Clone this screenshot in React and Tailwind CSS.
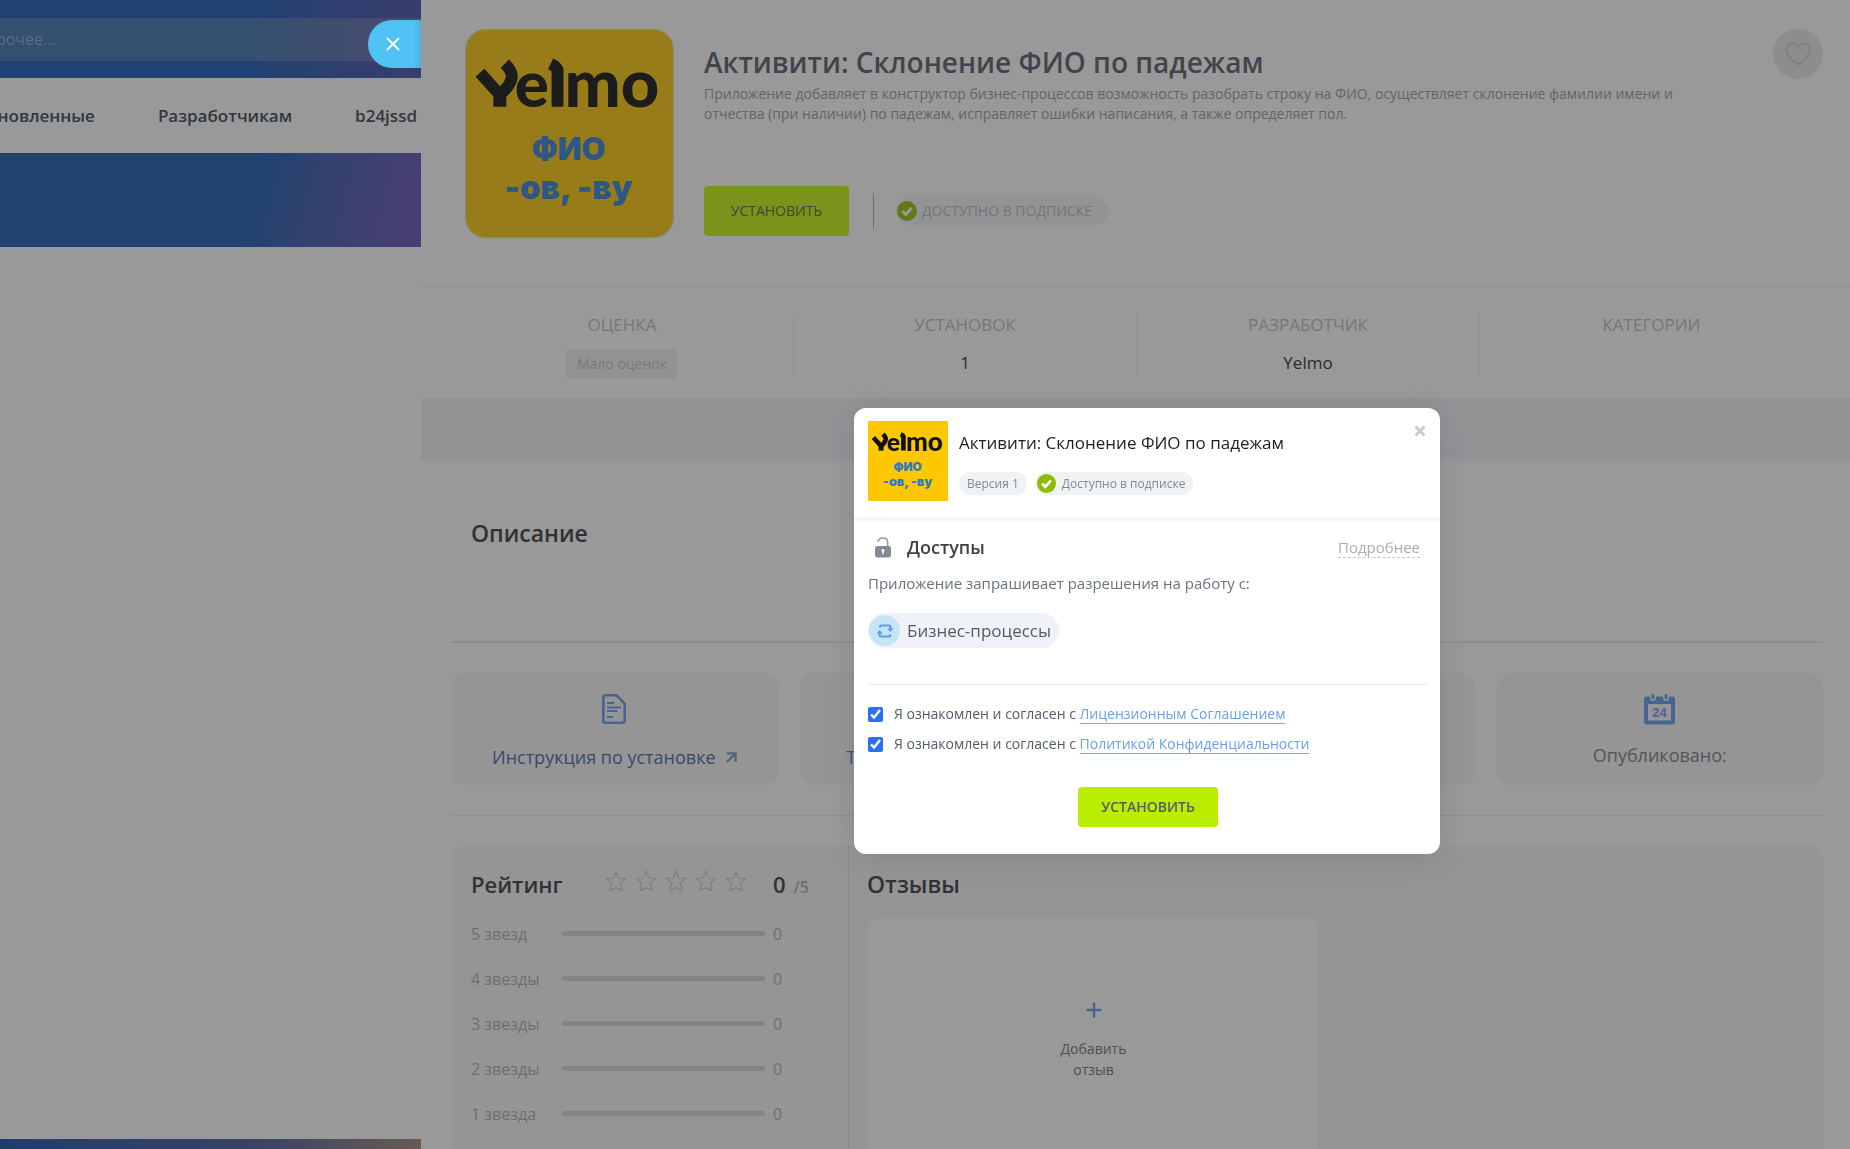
import { useState } from 'react'
import { X, Plus } from 'lucide-react'

const APP_NAME = 'Активити: Склонение ФИО по падежам'

function AppLogo({ className, ground, ink, blue }) {
  return (
    <svg viewBox="0 0 208 208" className={className} role="img" aria-label="Yelmo ФИО">
      <rect width="208" height="208" fill={ground} />
      <g fill="none" stroke={ink}>
        <path d="M14 43 L34 65 Q44 57 46 48 Q47 42 39 34" strokeWidth="12" />
        <path d="M34 60 V77" strokeWidth="13" />
        <path d="M92 77 V40 Q91 37 85 34" strokeWidth="12" />
      </g>
      <text x="49" y="77" fontFamily="Lato" fontWeight="900" fontSize="64" fill={ink}>e</text>
      <text x="99" y="77" fontFamily="Lato" fontWeight="900" fontSize="67" fill={ink}>mo</text>
      <g fill={blue} textAnchor="middle" fontFamily="Inter" fontWeight="900">
        <text x="103" y="131" fontSize="31">ФИО</text>
        <text x="103" y="170" fontSize="33">-ов, -ву</text>
      </g>
    </svg>
  )
}

function CheckBadge({ className, ground = '#8fbc00' }) {
  return (
    <svg viewBox="0 0 20 20" className={className} aria-hidden="true">
      <circle cx="10" cy="10" r="10" fill={ground} />
      <path d="M5.5 10.2 L8.8 13.4 L14.6 7" fill="none" stroke="#fff" strokeWidth="2.8" />
    </svg>
  )
}

function HeartIcon() {
  return (
    <svg viewBox="0 0 24 24" className="size-7" fill="none" stroke="#d6d7d8" strokeWidth="1.8" aria-hidden="true">
      <path d="M12 21 C6 16.5 2 13 2 8.5 C2 5.4 4.4 3 7.3 3 C9.3 3 11 4 12 5.8 C13 4 14.7 3 16.7 3 C19.6 3 22 5.4 22 8.5 C22 13 18 16.5 12 21 Z" />
    </svg>
  )
}

function DocumentIcon() {
  return (
    <svg viewBox="0 0 24 30" className="h-[30px] w-6" fill="none" stroke="#76a9f2" strokeWidth="2" aria-hidden="true">
      <path d="M3.5 1.3 H14.5 L22.7 9.8 V26.5 Q22.7 28.7 20.5 28.7 H3.5 Q1.3 28.7 1.3 26.5 V3.5 Q1.3 1.3 3.5 1.3 Z" strokeWidth="2.6" />
      <path d="M5 9 H12.5 M5 13.6 H19 M5 17 H15.5 M5 23 H11" />
    </svg>
  )
}

function CalendarIcon() {
  return (
    <svg viewBox="0 0 31 32" className="h-8 w-[31px]" aria-hidden="true">
      <path
        fillRule="evenodd"
        fill="#76a9f2"
        d="M2.5 3.5 H28.5 Q31 3.5 31 6 V29 Q31 31.5 28.5 31.5 H2.5 Q0 31.5 0 29 V6 Q0 3.5 2.5 3.5 Z M4 11 V27.5 H27 V11 Z"
      />
      <g fill="#76a9f2" stroke="#f9f9f9" strokeWidth="1.6">
        <rect x="6.6" y="0" width="4.6" height="7" rx="2.3" />
        <rect x="19.8" y="0" width="4.6" height="7" rx="2.3" />
      </g>
      <text x="15.5" y="23.5" textAnchor="middle" fontFamily="Liberation Sans" fontWeight="700" fontSize="13" fill="#76a9f2">
        24
      </text>
    </svg>
  )
}

function ArrowOut() {
  return (
    <svg viewBox="0 0 12 12" className="size-[11px]" fill="none" stroke="#8da6cf" strokeWidth="2.4" aria-hidden="true">
      <path d="M1 1.5 H10.5 V11 M10.5 1.5 L1 11" />
    </svg>
  )
}

function StarIcon() {
  return (
    <svg viewBox="0 0 22 22" className="size-[22px]" fill="none" stroke="#d2d5d8" strokeWidth="1.2" aria-hidden="true">
      <path d="M11 1 L13.6 8 L21 8.4 L15.2 12.8 L17.2 20.6 L11 17.6 L4.8 20.6 L6.8 12.8 L1 8.4 L8.4 8 Z" strokeLinejoin="round" />
    </svg>
  )
}

function LockIcon() {
  return (
    <svg viewBox="0 0 16 21" className="h-[21px] w-4" aria-hidden="true">
      <path d="M3 5 Q3.5 1 8 1 Q12.7 1 12.7 5.6 V10" fill="none" stroke="#949ba5" strokeWidth="1.5" />
      <rect y="9" width="16" height="11.5" rx="2.5" fill="#828b95" />
      <circle cx="8" cy="13.5" r="1.4" fill="#fff" />
      <rect x="7.3" y="13.5" width="1.4" height="3.6" fill="#fff" />
    </svg>
  )
}

function ProcessIcon() {
  return (
    <svg viewBox="0 0 18 16" className="h-4 w-[18px]" fill="none" stroke="#5f9bea" strokeWidth="2.2" aria-hidden="true">
      <path d="M4 4.5 V3.6 Q4 2.5 5.2 2.5 H13 Q14.4 2.5 14.4 3.8 V6" />
      <path d="M14 11.5 V12.4 Q14 13.5 12.8 13.5 H5 Q3.6 13.5 3.6 12.2 V10" />
      <path d="M11.2 5.6 H17.6 L14.4 9 Z M0.4 10.4 H6.8 L3.6 7 Z" fill="#5f9bea" stroke="none" />
    </svg>
  )
}

function StorePage() {
  return (
    <aside className="flex w-[421px] shrink-0 flex-col overflow-hidden bg-white">
      <div className="bg-linear-to-r from-[#356ebd] via-[#356ebb] via-60% to-[#5f65b8]">
        <div className="flex h-[78px] items-center">
          <input
            type="text"
            aria-label="Поиск"
            placeholder="прочее..."
            className="-ml-[22px] h-[43px] flex-1 bg-[#e8e0b8]/20 pl-2 text-base text-white outline-none placeholder:text-[#b0bcd8]/80"
          />
        </div>
      </div>
      <nav className="flex h-[75px] items-center justify-end gap-[63px] pr-1 text-[17px] font-semibold whitespace-nowrap text-[#525c69]">
        <a href="#installed" className="shrink-0">Установленные</a>
        <a href="#developers" className="shrink-0">Разработчикам</a>
        <a href="#b24jssdk" className="shrink-0">b24jssd</a>
      </nav>
      <div className="h-[94px] shrink-0 bg-linear-105 from-[#386fb8] from-0% via-[#386fb8] via-60% to-[#7d67c4]" />
      <div className="flex-1" />
      <div className="h-2.5 shrink-0 bg-linear-to-r from-[#3565b8] via-[#606fa8] via-60% to-[#ad9888]" />
    </aside>
  )
}

function Header() {
  return (
    <header className="flex border-b border-[#f0f1f2] px-11 pt-[29px] pb-12">
      <AppLogo
        ground="#fccf2b"
        ink="#303030"
        blue="#4e92df"
        className="size-[209px] shrink-0 rounded-[20px] border border-[#dcdfe2]"
      />
      <div className="ml-[30px] max-w-[1000px] flex-1 pt-[15px]">
        <h1 className="text-[28px] leading-9 font-semibold text-[#6c747f]">{APP_NAME}</h1>
        <p className="mt-1 text-sm leading-5 text-[#a4a9af]">
          Приложение добавляет в конструктор бизнес-процессов возможность разобрать строку на ФИО, осуществляет склонение
          фамилии имени и отчества (при наличии) по падежам, исправляет ошибки написания, а также определяет пол.
        </p>
        <div className="mt-[62px] flex items-center">
          <button type="button" className="h-[50px] w-[145px] rounded bg-[#caf52d] text-sm font-medium text-[#6b7560]">
            УСТАНОВИТЬ
          </button>
          <div className="ml-6 h-9 w-px bg-[#b4b9be]" />
          <div className="ml-[22px] flex h-7 items-center gap-[5px] rounded-full bg-[#f4f5f8] pr-4 pl-px text-sm text-[#c2c5c9]">
            <CheckBadge className="size-5" ground="#a5cc2d" />
            ДОСТУПНО В ПОДПИСКЕ
          </div>
        </div>
      </div>
      <button
        type="button"
        aria-label="В избранное"
        className="-mr-[17px] ml-auto flex size-[50px] shrink-0 items-center justify-center rounded-full bg-[#ebebec]"
      >
        <HeartIcon />
      </button>
    </header>
  )
}

function Stat({ label, children }) {
  return (
    <div className="flex h-16 flex-col items-center border-r border-[#f3f4f5] last:border-r-0">
      <dt className="text-[17px] leading-6 text-[#c4c7ca]">{label}</dt>
      <dd className="mt-3 flex h-[30px] items-center text-[17px] text-[#444a52]">{children}</dd>
    </div>
  )
}

function Stats() {
  return (
    <dl className="grid grid-cols-4 pt-[26px] pr-[27px] pb-[21px] pl-[30px]">
      <Stat label="ОЦЕНКА">
        <span className="flex h-[30px] items-center rounded bg-[#f1f3f6] px-[11px] text-sm text-[#c8cccf]">Мало оценок</span>
      </Stat>
      <Stat label="УСТАНОВОК">1</Stat>
      <Stat label="РАЗРАБОТЧИК">Yelmo</Stat>
      <Stat label="КАТЕГОРИИ" />
    </dl>
  )
}

function InfoCard({ icon, children }) {
  return (
    <div className="flex h-28 flex-col items-center gap-4 rounded-[14px] bg-[#f9f9f9] pt-5 text-[18px] leading-7 text-[#8a8f96]">
      <div className="flex h-8 items-center">{icon}</div>
      {children}
    </div>
  )
}

function DocLink({ href, children }) {
  return (
    <a href={href} className="flex items-center gap-2.5 pt-0.5 text-[#5b7bb8]">
      {children}
      <ArrowOut />
    </a>
  )
}

const RATINGS = [
  ['5 звезд', 0],
  ['4 звезды', 0],
  ['3 звезды', 0],
  ['2 звезды', 0],
  ['1 звезда', 0],
]

function Rating() {
  return (
    <section className="w-[398px] shrink-0 border-r border-[#e3e5e8] px-5 pt-5">
      <div className="flex items-center">
        <h2 className="w-[134px] text-[22px] leading-9 font-semibold text-[#50545a]">Рейтинг</h2>
        <div className="flex gap-2 pb-1.5">
          {RATINGS.map(([label]) => (
            <StarIcon key={label} />
          ))}
        </div>
        <div className="ml-[26px] flex items-baseline gap-2">
          <span className="text-[22px] leading-9 font-semibold text-[#50545a]">0</span>
          <span className="text-base font-semibold text-[#b4b8bd]">/5</span>
        </div>
      </div>
      <ul className="mt-[9px] text-base text-[#b6babf]">
        {RATINGS.map(([label, count]) => (
          <li key={label} className="flex h-[45px] items-center">
            <span className="w-[91px]">{label}</span>
            <span className="h-[5px] w-[203px] rounded-full bg-[#dcdddf]" />
            <span className="ml-2">{count}</span>
          </li>
        ))}
      </ul>
    </section>
  )
}

function Reviews() {
  return (
    <section className="flex flex-1 flex-col px-[18px] pt-5">
      <h2 className="text-[23px] leading-9 font-semibold text-[#50545a]">Отзывы</h2>
      <div className="mt-3.5 grid flex-1 grid-cols-2 gap-8">
        <button
          type="button"
          className="-mb-5 flex flex-col items-center justify-start rounded-[14px] border border-[#f4f5f6] bg-white pt-[82px] text-sm leading-[21px] text-[#80868e]"
        >
          <Plus className="size-[22px] text-[#76a9f2]" strokeWidth={2.6} />
          <span className="mt-[17px] w-20">Добавить отзыв</span>
        </button>
      </div>
    </section>
  )
}

function AppPanel() {
  return (
    <main className="flex min-w-0 flex-1 flex-col overflow-hidden bg-white">
      <Header />
      <Stats />
      <div className="h-[62px] shrink-0 border-t border-[#f0f2f4] bg-[#f4f5f8]" />
      <div className="flex flex-1 flex-col pr-[27px] pl-[30px]">
        <section className="h-[183px] shrink-0 border-b-2 border-[#ebecee] px-5 pt-[55px]">
          <h2 className="text-[23px] leading-9 font-semibold text-[#50545a]">Описание</h2>
        </section>
        <div className="grid grid-cols-4 gap-[22px] border-b border-[#eff0f1] py-[30px]">
          <InfoCard icon={<DocumentIcon />}>
            <DocLink href="#install">Инструкция по установке</DocLink>
          </InfoCard>
          <InfoCard icon={<DocumentIcon />}>
            <DocLink href="#support">Техническая поддержка</DocLink>
          </InfoCard>
          <InfoCard />
          <InfoCard icon={<CalendarIcon />}>Опубликовано:</InfoCard>
        </div>
        <div className="mt-[30px] flex flex-1 rounded-t-[14px] bg-[#f9f9f9]">
          <Rating />
          <Reviews />
        </div>
      </div>
    </main>
  )
}

function Consent({ href, children }) {
  const [checked, setChecked] = useState(true)
  return (
    <label className="flex h-[30px] items-center gap-[11px]">
      <input
        type="checkbox"
        checked={checked}
        onChange={(event) => setChecked(event.target.checked)}
        className="size-[15px] accent-[#2a70f5]"
      />
      <span>
        Я ознакомлен и согласен с{' '}
        <a href={href} className="border-b border-[#7ba6e6] text-[#6a9fe8]">
          {children}
        </a>
      </span>
    </label>
  )
}

function InstallDialog() {
  return (
    <div
      role="dialog"
      aria-label={APP_NAME}
      className="relative w-[586px] rounded-xl bg-white pb-[27px] shadow-[0_4px_30px_rgba(83,92,105,0.3)]"
    >
      <button type="button" aria-label="Закрыть" className="absolute top-3.5 right-[11px] text-[#c6c9cc]">
        <X className="size-[18px]" strokeWidth={3.6} strokeLinecap="butt" />
      </button>
      <header className="flex gap-[11px] border-b-[5px] border-[#f5f7f8] px-3.5 pt-[13px] pb-4">
        <AppLogo ground="#fdc800" ink="#111111" blue="#2f7cc0" className="size-20" />
        <div className="pt-2">
          <h2 className="text-[17px] leading-7 font-medium text-[#1c1e22]">{APP_NAME}</h2>
          <div className="mt-[15px] flex gap-2 text-xs text-[#828b95]">
            <span className="flex h-[23px] items-center rounded-full bg-[#eff3f6] px-2">Версия 1</span>
            <span className="flex h-[23px] items-center gap-1.5 rounded-full bg-[#eff3f6] pr-2 pl-0.5">
              <CheckBadge className="size-[19px]" />
              Доступно в подписке
            </span>
          </div>
        </div>
      </header>
      <div className="pt-2.5 pr-3 pl-3.5">
        <div className="flex items-center pr-2 pl-[7px]">
          <LockIcon />
          <h3 className="ml-4 text-[18px] leading-[30px] font-semibold text-[#404346]">Доступы</h3>
          <a href="#details" className="ml-auto border-b border-dashed border-[#c8ccd0] text-[15px] leading-5 text-[#a8adb4]">
            Подробнее
          </a>
        </div>
        <p className="mt-[11px] text-[15px] leading-5 text-[#6a737f]">Приложение запрашивает разрешения на работу с:</p>
        <span className="mt-5 inline-flex h-[35px] items-center gap-[7px] rounded-full bg-[#eff3f7] pr-2 pl-px text-[17px] text-[#525c69]">
          <span className="flex size-[31px] items-center justify-center rounded-full bg-[#c5e5f3]">
            <ProcessIcon />
          </span>
          Бизнес-процессы
        </span>
        <hr className="mt-9 border-[#edeef0]" />
        <div className="mt-3.5 text-sm text-[#525c69]">
          <Consent href="#license">Лицензионным Соглашением</Consent>
          <Consent href="#privacy">Политикой Конфиденциальности</Consent>
        </div>
        <button
          type="button"
          className="mx-auto mt-7 block h-10 w-[140px] rounded bg-[#bbed00] text-sm font-semibold text-[#535c69]"
        >
          УСТАНОВИТЬ
        </button>
      </div>
    </div>
  )
}

export default function App() {
  return (
    <div className="flex h-screen overflow-hidden font-['Open_Sans',sans-serif]">
      <StorePage />
      <AppPanel />
      <div className="fixed inset-0 z-10 flex items-start justify-center bg-black/40 pt-[408px] pl-[444px]">
        <InstallDialog />
      </div>
      <button
        type="button"
        aria-label="Закрыть панель"
        className="fixed top-5 left-[368px] z-20 flex h-12 w-[53px] items-center rounded-l-full bg-linear-to-r from-[#50c2f4] from-85% to-[#4ab2e0] pl-3.5 text-white"
      >
        <X className="size-[22px]" strokeWidth={2} />
      </button>
    </div>
  )
}
